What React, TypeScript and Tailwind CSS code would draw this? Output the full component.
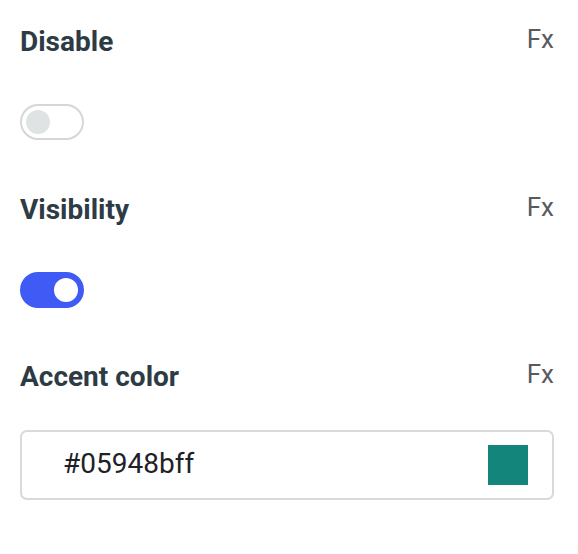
import * as React from 'react'

const FONT = { fontFamily: 'Roboto, "Liberation Sans", sans-serif' }

const Header: React.FC<{ label: string }> = ({ label }) => (
  <div className="flex items-start justify-between">
    <span className="text-[28px] leading-[32px] font-bold text-[#2d3b45]">
      {label}
    </span>
    <span className="text-[26px] leading-[24px] text-[#575b60] mt-[1px]">
      Fx
    </span>
  </div>
)

const Toggle: React.FC<{ on?: boolean }> = ({ on }) =>
  on ? (
    <div className="flex h-[36px] w-[64px] items-center justify-end rounded-full bg-[#3f5af5] px-[6px]">
      <div className="h-[24px] w-[24px] rounded-full bg-white" />
    </div>
  ) : (
    <div className="flex h-[36px] w-[64px] items-center rounded-full border-2 border-[#d6d6d6] bg-white px-[4px]">
      <div className="h-[24px] w-[24px] rounded-full bg-[#dfe3e4]" />
    </div>
  )

const App: React.FC = () => {
  return (
    <div
      className="flex h-[554px] w-[578px] flex-col bg-white pl-[20px] pr-[24px] pt-[26px]"
      style={FONT}
    >
      <Header label="Disable" />
      <div className="mt-[46px]">
        <Toggle />
      </div>
      <div className="mt-[54px]">
        <Header label="Visibility" />
      </div>
      <div className="mt-[46px]">
        <Toggle on />
      </div>
      <div className="mt-[53px]">
        <Header label="Accent color" />
      </div>
      <div className="mt-[37px] flex h-[70px] items-center justify-between rounded-[7px] border-2 border-[#d9d9d9] pl-[41px] pr-[24px]">
        <span className="text-[28px] leading-[32px] text-[#1d2228] -mt-[2px]">#05948bff</span>
        <div className="h-[40px] w-[40px] bg-[#14857a]" />
      </div>
    </div>
  )
}

export default App
